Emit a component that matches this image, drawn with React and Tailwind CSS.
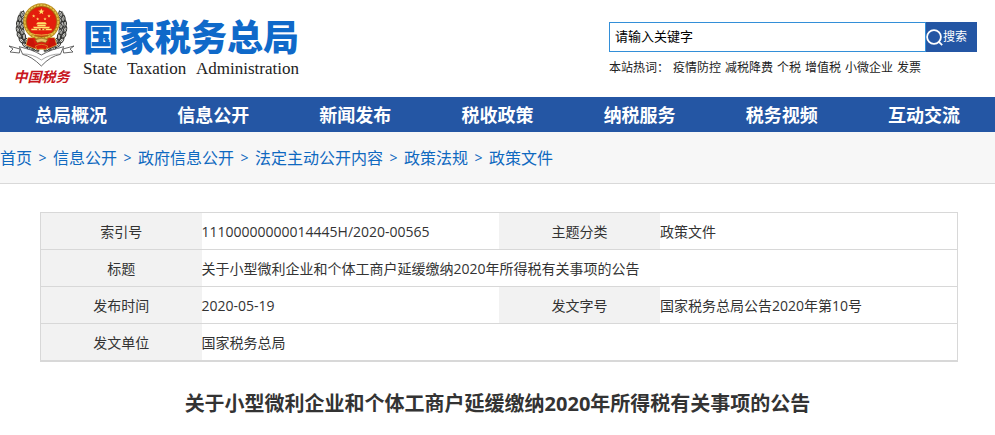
import { useState } from 'react';

const hotWords = ['疫情防控', '减税降费', '个税', '增值税', '小微企业', '发票'];

const navItems = ['总局概况', '信息公开', '新闻发布', '税收政策', '纳税服务', '税务视频', '互动交流'];

const crumbs = ['首页', '信息公开', '政府信息公开', '法定主动公开内容', '政策法规', '政策文件'];

const rows = [
  [['索引号', '11100000000014445H/2020-00565'], ['主题分类', '政策文件']],
  [['标题', '关于小型微利企业和个体工商户延缓缴纳2020年所得税有关事项的公告']],
  [['发布时间', '2020-05-19'], ['发文字号', '国家税务总局公告2020年第10号']],
  [['发文单位', '国家税务总局']],
];

const star = 'M0-10 2.4-3.2 9.5-3.1 3.8 1.2 5.9 8.1 0 4-5.9 8.1-3.8 1.2-9.5-3.1-2.4-3.2Z';

// leaves of one side of the wreath: x, y, rotation
const leaves = [
  [67, 42, 18], [59, 56, -6], [70, 60, 28], [55, 72, -12], [67, 78, 24], [54, 89, -22],
  [67, 95, 14], [58, 106, -34], [72, 110, 4], [65, 121, -46], [80, 124, -10], [76, 135, -56],
  [92, 136, -28], [91, 146, -64], [107, 145, -50],
];

const Wreath = () => (
  <g>
    <path d="M66 34C42 70 50 128 118 152" fill="none" stroke="#8d8d88" strokeWidth="9" />
    {leaves.map(([x, y, r]) => (
      <g key={`${x}-${y}`} transform={`translate(${x} ${y}) rotate(${r})`}>
        <path d="M0-11C7-5 6 5 0 10C-6 5-7-5 0-11Z" fill="#f4f4ee" stroke="#2d2d2b" strokeWidth="3" />
        <path d="M0-5V7" stroke="#3d3d3a" strokeWidth="2" />
      </g>
    ))}
  </g>
);

const Emblem = () => (
  <svg viewBox="24 5 201 195" className="h-[65px] w-[67px]" aria-hidden="true">
    <Wreath />
    <g transform="translate(249 0) scale(-1 1)">
      <Wreath />
    </g>
    <path d="M84 112h80l6 22q-46 26-92 0z" fill="#c81408" stroke="#e5b93d" strokeWidth="2" />
    <circle cx="124.5" cy="64" r="55" fill="#b98a1c" />
    <circle cx="124.5" cy="64" r="50" fill="none" stroke="#e6c64c" strokeWidth="4" strokeDasharray="7 3" />
    <circle cx="124.5" cy="64" r="45" fill="#e41d0d" stroke="#a84b0c" strokeWidth="2" />
    <g fill="#ffe36b">
      <path d={star} transform="translate(124 34)" />
      <path d={star} transform="translate(101 47) scale(.55)" />
      <path d={star} transform="translate(113 56) scale(.5)" />
      <path d={star} transform="translate(135 56) scale(.5)" />
      <path d={star} transform="translate(147 47) scale(.55)" />
      <path d="M108 72l5-6h23l5 6zM112 73h25v5h-25zM99 79h51l-3 5h-45zM94 85h61v5H94z" />
    </g>
    <path d="M112 86h4v4h-4zM122 84h5v6h-5zM133 86h4v4h-4z" fill="#b81408" />
    <path d="M88 98q36 13 73 0" fill="none" stroke="#e9bd42" strokeWidth="3" />
    <path d="M98 112q26 13 53 0l-6 20h-41z" fill="#dc1c0c" />
    <path d="M106 118q18-9 37 0l-6 9q-12-5-25 0z" fill="#e6c364" stroke="#8d651a" strokeWidth="2" />
    <path d="M106 137q18-10 37 0l-5 11q-13-5-27 0z" fill="#dc1c0c" stroke="#d9a72e" strokeWidth="2" />
    <g fill="#fff" stroke="#4b4b4b" strokeWidth="2.5" strokeLinejoin="round">
      <path d="M60 146L27 137l12 9-9 9 28 3z" />
      <path d="M189 146l33-9-12 9 9 9-28 3z" />
      <path d="M58 139q18 5 35 10 18 7 31 15 14-8 32-15 17-5 35-10l-10 23q-29 5-57 35-29-29-56-35z" />
      <path d="M68 161q29-1 56 18 28-19 57-18" fill="none" stroke="#777" strokeWidth="2" />
    </g>
  </svg>
);

const SearchIcon = () => (
  <svg viewBox="0 0 17 17" className="size-[17px] shrink-0" fill="none" stroke="currentColor" strokeWidth="1.8" aria-hidden="true">
    <circle cx="8" cy="8" r="6.9" />
    <path d="M12.4 12.4l3.8 3.8" />
  </svg>
);

const Header = () => {
  const [keyword, setKeyword] = useState('');

  return (
    <header className="flex h-[97px] items-start justify-between pl-2 pr-[18px]">
      <a href="#" className="flex items-start gap-2">
        <div className="flex flex-col items-center pt-0.5">
          <Emblem />
          <span className="text-sm leading-5 font-bold italic text-[#c8161d]">中国税务</span>
        </div>
        <div className="flex flex-col pt-[18px]">
          <span className="font-['Liberation_Sans','Noto_Sans_CJK_SC',sans-serif] text-[36px] leading-[41px] font-black text-[#0f69c9]">
            国家税务总局
          </span>
          <span className="flex justify-between font-['Liberation_Serif',serif] text-[17px] leading-5 text-[#222]">
            <span>State</span>
            <span>Taxation</span>
            <span>Administration</span>
          </span>
        </div>
      </a>
      <div className="w-[368px] pt-[22px]">
        <form className="flex h-[30px]" onSubmit={(e) => e.preventDefault()}>
          <input
            type="text"
            aria-label="请输入关键字"
            placeholder="请输入关键字"
            value={keyword}
            onChange={(e) => setKeyword(e.target.value)}
            className="min-w-0 flex-1 border border-[#338fd8] px-[5px] text-[13px] text-black placeholder:text-black outline-none"
          />
          <button type="submit" className="flex w-[51px] items-center bg-[#2456a4] text-xs text-white">
            <SearchIcon />
            搜索
          </button>
        </form>
        <div className="mt-2 flex gap-1 text-xs leading-4 text-[#222]">
          <span>本站热词：</span>
          {hotWords.map((word) => (
            <a key={word} href="#">{word}</a>
          ))}
        </div>
      </div>
    </header>
  );
};

const App = () => (
  <div className="bg-white font-['Open_Sans','Noto_Sans_CJK_SC',sans-serif] text-[#333]">
    <Header />
    <nav className="grid grid-cols-7 bg-[#2456a4]">
      {navItems.map((item) => (
        <a key={item} href="#" className="h-[35px] text-center text-lg leading-9 font-bold text-white">
          {item}
        </a>
      ))}
    </nav>
    <div className="flex h-[52px] items-center border-b border-[#d9d9d9] bg-[#f7f7f7] text-base text-[#0f69c0]">
      {crumbs.map((crumb, i) => (
        <span key={crumb} className="flex items-center">
          {i > 0 && <span className="w-[21px] text-center text-sm">&gt;</span>}
          <a href="#">{crumb}</a>
        </span>
      ))}
    </div>
    <main className="pt-7">
      <div className="mr-[37px] ml-10">
        <table className="w-full table-fixed border-collapse border border-b-2 border-[#d8d8d8] text-sm">
          <colgroup>
            <col className="w-[161px]" />
            <col />
            <col className="w-[161px]" />
            <col />
          </colgroup>
          <tbody>
            {rows.map((row) => (
              <tr key={row[0][0]} className="h-[37px] border-t border-[#d8d8d8]">
                {row.map(([label, value]) => [
                  <th key={label} scope="row" className="bg-[#f2f2f2] px-0 pt-0.5 pb-0 font-normal">{label}</th>,
                  <td key={value} colSpan={row.length === 1 ? 3 : 1} className="px-0 pt-0.5 pb-0">{value}</td>,
                ])}
              </tr>
            ))}
          </tbody>
        </table>
      </div>
      <h1 className="mt-7 pb-4 text-center text-xl leading-7 font-bold">
        关于小型微利企业和个体工商户延缓缴纳2020年所得税有关事项的公告
      </h1>
    </main>
  </div>
);

export default App;
